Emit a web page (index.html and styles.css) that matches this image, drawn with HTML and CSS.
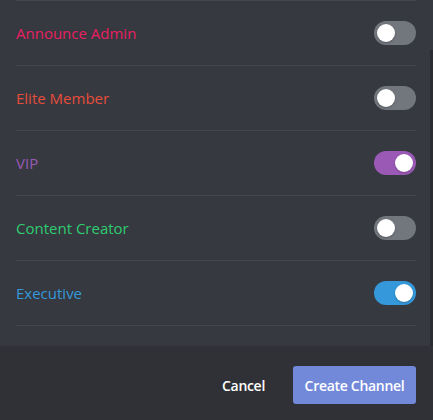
FILE: index.html
```html
<!DOCTYPE html>
<html>
<head>
<meta charset="utf-8">
<link rel="stylesheet" href="styles.css">
</head>
<body>
<div class="modal">
  <div class="scroller">
    <ul class="roles">
      <li class="role"><span class="name c-admin">Announce Admin</span><span class="toggle"><span class="knob"></span></span></li>
      <li class="role"><span class="name c-elite">Elite Member</span><span class="toggle"><span class="knob"></span></span></li>
      <li class="role"><span class="name c-vip">VIP</span><span class="toggle on on-vip"><span class="knob"></span></span></li>
      <li class="role"><span class="name c-creator">Content Creator</span><span class="toggle"><span class="knob"></span></span></li>
      <li class="role"><span class="name c-exec">Executive</span><span class="toggle on on-exec"><span class="knob"></span></span></li>
    </ul>
    <div class="scrollbar"></div>
  </div>
  <div class="footer">
    <button class="btn-link">Cancel</button>
    <button class="btn-primary">Create Channel</button>
  </div>
</div>
</body>
</html>
```
FILE: styles.css
```css
* { box-sizing: border-box; }
html, body {
  margin: 0;
  padding: 0;
  background: #36393f;
  width: 433px;
  height: 420px;
  overflow: hidden;
  font-family: "Open Sans", "Noto Sans", sans-serif;
}
.modal {
  display: flex;
  flex-direction: column;
  height: 420px;
}
.scroller {
  position: relative;
  background: #36393f;
  padding: 0 17px 20px 16px;
}
.roles {
  list-style: none;
  margin: 0;
  padding: 0;
  border-top: 1px solid #43464c;
}
.role {
  height: 65px;
  border-bottom: 1px solid #43464c;
  display: flex;
  align-items: center;
  justify-content: space-between;
  padding-bottom: 1px;
}
.name {
  font-size: 15px;
  line-height: 20px;
  font-weight: 500;
}
.c-admin { color: #e91e63; }
.c-elite { color: #e74c3c; }
.c-vip { color: #9b59b6; }
.c-creator { color: #2ecc71; }
.c-exec { color: #3498db; }
.toggle {
  width: 42px;
  height: 24px;
  border-radius: 12px;
  background: #72767d;
  display: flex;
  align-items: center;
  padding: 0 3px;
}
.toggle.on { justify-content: flex-end; }
.on-vip { background: #9b59b6; }
.on-exec { background: #3498db; }
.knob {
  width: 18px;
  height: 18px;
  border-radius: 50%;
  background: #ffffff;
  box-shadow: 0 1px 2px rgba(0,0,0,0.25);
}
.scrollbar {
  position: absolute;
  right: 0;
  top: 50px;
  bottom: 0;
  width: 3px;
  background: #2a2c31;
}
.footer {
  flex: 1;
  background: #2f3136;
  display: flex;
  justify-content: flex-end;
  align-items: flex-start;
  padding: 20px 17px 16px 16px;
  gap: 28px;
}
button {
  font-family: inherit;
  font-size: 14px;
  font-weight: 600;
  letter-spacing: -0.3px;
  border: none;
  cursor: pointer;
  white-space: nowrap;
}
.btn-link {
  background: none;
  color: #ffffff;
  height: 38px;
  padding: 0;
}
.btn-primary {
  background: #7289da;
  color: #ffffff;
  height: 38px;
  width: 123px;
  border-radius: 3px;
  padding: 0;
}
```
